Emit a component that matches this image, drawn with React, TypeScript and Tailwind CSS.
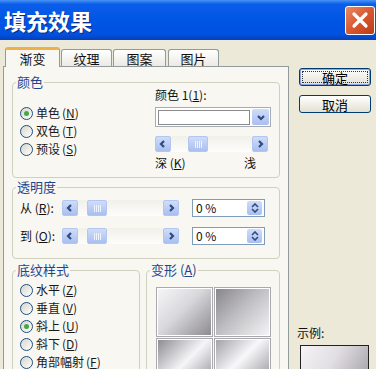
import React from "react";

const F = "font-['Noto_Sans_CJK_SC','Noto_Sans',sans-serif]";

function Chevron({ dir }: { dir: "left" | "right" | "down" | "up" }) {
  const d = {
    left: "M6 2 L3 5 L6 8",
    right: "M4 2 L7 5 L4 8",
    down: "M2 4 L5 7 L8 4",
    up: "M2 6 L5 3 L8 6",
  }[dir];
  return (
    <svg width="10" height="10" viewBox="0 0 10 10">
      <path d={d} fill="none" stroke="#2f4a80" strokeWidth="2.2" />
    </svg>
  );
}

function Radio({ checked }: { checked?: boolean }) {
  return (
    <span className="w-[13px] h-[13px] shrink-0 rounded-full border border-[#1c5180] bg-gradient-to-br from-[#d6d5cc] to-[#ffffff] flex items-center justify-center">
      {checked && <span className="w-[5px] h-[5px] rounded-full bg-[#45a845]" />}
    </span>
  );
}

function RadioRow({ label, k, checked }: { label: string; k: string; checked?: boolean }) {
  return (
    <div className="h-[18px] flex items-center gap-[3px]">
      <Radio checked={checked} />
      <span className="text-[12px] leading-[14px] text-[#1a1a1a] whitespace-nowrap">
        {label}
        <span className="ml-[2px]">
          (<u>{k}</u>)
        </span>
      </span>
    </div>
  );
}

function ArrowBtn({ dir }: { dir: "left" | "right" }) {
  return (
    <div className="w-[16px] h-[16px] shrink-0 rounded-[2px] border border-[#b2c6f0] bg-gradient-to-b from-[#d0ddfa] to-[#a9bfef] flex items-center justify-center">
      <Chevron dir={dir} />
    </div>
  );
}

function Thumb() {
  return (
    <div className="w-[20px] h-[16px] shrink-0 rounded-[2px] border border-[#b2c6f0] bg-gradient-to-b from-[#d0ddfa] to-[#a9bfef] flex items-center justify-center gap-[1px]">
      <span className="w-[1px] h-[7px] bg-[#eef3fd]" />
      <span className="w-[1px] h-[7px] bg-[#eef3fd]" />
      <span className="w-[1px] h-[7px] bg-[#eef3fd]" />
      <span className="w-[1px] h-[7px] bg-[#eef3fd]" />
    </div>
  );
}

function Slider({ w, off }: { w: string; off: string }) {
  return (
    <div className={`${w} h-[16px] flex items-center bg-gradient-to-b from-[#f1f0ea] to-[#fdfdfb]`}>
      <ArrowBtn dir="left" />
      <div className={off}>
        <Thumb />
      </div>
      <div className="flex-1" />
      <ArrowBtn dir="right" />
    </div>
  );
}

function Group({ label, className, children }: { label: React.ReactNode; className: string; children?: React.ReactNode }) {
  return (
    <div className={`border border-[#d0d0bf] rounded-[4px] shrink-0 ${className}`}>
      <div className="-mt-[9px] ml-[3px] px-[1px] w-fit bg-[#f8f7f2] text-[13px] leading-[16px] text-[#1f4590]">
        {label}
      </div>
      {children}
    </div>
  );
}

function SpinBox() {
  return (
    <div className="ml-[13px] w-[73px] h-[18px] border border-[#7f9db9] bg-white flex items-center">
      <span className="pl-[3px] flex-1 text-[12px] leading-none text-[#111]">0 %</span>
      <div className="w-[15px] h-[14px] mr-[2px] rounded-[2px] bg-gradient-to-b from-[#d0ddfa] to-[#a9bfef] flex flex-col items-center justify-center">
        <svg width="8" height="5" viewBox="0 0 8 5">
          <path d="M1 4 L4 1 L7 4" fill="none" stroke="#2f4a80" strokeWidth="1.6" />
        </svg>
        <svg width="8" height="5" viewBox="0 0 8 5">
          <path d="M1 1 L4 4 L7 1" fill="none" stroke="#2f4a80" strokeWidth="1.6" />
        </svg>
      </div>
    </div>
  );
}

function XPButton({ children, def }: { children: React.ReactNode; def?: boolean }) {
  return (
    <div
      className={`w-[72px] h-[18px] rounded-[3px] border border-[#003c74] bg-gradient-to-b from-[#ffffff] to-[#e3e0d2] flex ${
        def ? "p-[2px] shadow-[inset_0_0_0_1px_#8aa6e8]" : ""
      }`}
    >
      <div
        className={`flex-1 flex items-center justify-center text-[13px] leading-none text-black ${
          def ? "border border-dotted border-[#333]" : ""
        }`}
      >
        {children}
      </div>
    </div>
  );
}

export default function App() {
  return (
    <div className={`w-[376px] h-[369px] overflow-hidden bg-[#ece9d8] ${F} flex flex-col`}>
      {/* Title bar */}
      <div className="h-[40px] shrink-0 flex items-center justify-between pl-[4px] pr-[1px] bg-[linear-gradient(to_bottom,#4a94f6_0%,#0b5ee9_10%,#0055e4_50%,#0052e0_85%,#0640b8_100%)]">
        <span className="text-[22px] font-bold leading-none text-white [text-shadow:1px_1px_0_#0a2a8a]">
          填充效果
        </span>
        <div className="w-[30px] h-[29px] rounded-[3px] border border-white bg-gradient-to-br from-[#ea8865] via-[#d8582f] to-[#b93a18] flex items-center justify-center">
          <svg width="18" height="18" viewBox="0 0 18 18">
            <path d="M3 3 L15 15 M15 3 L3 15" stroke="#ffffff" strokeWidth="3.2" strokeLinecap="round" />
          </svg>
        </div>
      </div>

      <div className="flex flex-1 min-h-0">
        {/* Left: tabs + panel */}
        <div className="w-[289px] shrink-0 pl-[3px] pt-[7px] flex flex-col">
          <div className="h-[19px] flex items-end pl-[2px]">
            <div className="relative z-10 w-[55px] h-[20px] -mb-[1px] border border-b-0 border-[#919b9c] border-t-[3px] border-t-[#f0b048] rounded-t-[3px] bg-[#f8f7f2] flex items-center justify-center text-[13px] leading-none text-[#111]">
              渐变
            </div>
            <div className="ml-[1px] w-[51px] h-[17px] border border-b-0 border-[#919b9c] rounded-t-[3px] bg-gradient-to-b from-[#ffffff] to-[#ebeae4] flex items-center justify-center text-[13px] leading-none text-[#111]">
              纹理
            </div>
            <div className="ml-[1px] w-[53px] h-[17px] border border-b-0 border-[#919b9c] rounded-t-[3px] bg-gradient-to-b from-[#ffffff] to-[#ebeae4] flex items-center justify-center text-[13px] leading-none text-[#111]">
              图案
            </div>
            <div className="ml-[2px] w-[51px] h-[17px] border border-b-0 border-[#919b9c] rounded-t-[3px] bg-gradient-to-b from-[#ffffff] to-[#ebeae4] flex items-center justify-center text-[13px] leading-none text-[#111]">
              图片
            </div>
          </div>

          <div className="w-[286px] h-[320px] shrink-0 border border-[#919b9c] bg-[#f8f7f2] pl-[8px] pr-[8px] pt-[15px] flex flex-col">
            {/* 颜色 */}
            <Group label="颜色" className="w-[268px] h-[96px]">
              <div className="flex">
                <div className="w-[142px] pl-[7px] pt-[14px] flex flex-col">
                  <RadioRow label="单色" k="N" checked />
                  <RadioRow label="双色" k="T" />
                  <RadioRow label="预设" k="S" />
                </div>
                <div className="w-[116px] -mt-[2px] flex flex-col">
                  <div className="h-[14px] text-[12px] leading-[14px] text-[#111] whitespace-nowrap">
                    颜色 1(<u>1</u>):
                  </div>
                  <div className="mt-[5px] w-[116px] h-[20px] border border-[#a5acb5] bg-white flex items-center p-[1px] gap-[2px]">
                    <div className="flex-1 h-[15px] ml-[1px] border border-[#8a8a8a] bg-white" />
                    <div className="w-[17px] h-full rounded-[2px] bg-gradient-to-b from-[#d0ddfa] to-[#a9bfef] flex items-center justify-center">
                      <Chevron dir="down" />
                    </div>
                  </div>
                  <div className="mt-[9px]">
                    <Slider w="w-[113px]" off="ml-[17px]" />
                  </div>
                  <div className="mt-[4px] w-[101px] flex justify-between text-[12px] leading-[14px] text-[#111]">
                    <span>
                      深 (<u>K</u>)
                    </span>
                    <span>浅</span>
                  </div>
                </div>
              </div>
            </Group>

            {/* 透明度 */}
            <Group label="透明度" className="mt-[9px] w-[268px] h-[72px]">
              <div className="mt-[4px] h-[18px] pl-[7px] flex items-center">
                <span className="w-[42px] text-[12px] leading-none text-[#111] whitespace-nowrap">
                  从 (<u>R</u>):
                </span>
                <Slider w="w-[117px]" off="ml-[9px]" />
                <SpinBox />
              </div>
              <div className="mt-[10px] h-[18px] pl-[7px] flex items-center">
                <span className="w-[42px] text-[12px] leading-none text-[#111] whitespace-nowrap">
                  到 (<u>O</u>):
                </span>
                <Slider w="w-[117px]" off="ml-[9px]" />
                <SpinBox />
              </div>
            </Group>

            <div className="mt-[11px] flex gap-[6px]">
              <Group label="底纹样式" className="w-[128px] h-[130px]">
                <div className="mt-[3px] pl-[7px] flex flex-col">
                  <RadioRow label="水平" k="Z" />
                  <RadioRow label="垂直" k="V" />
                  <RadioRow label="斜上" k="U" checked />
                  <RadioRow label="斜下" k="D" />
                  <RadioRow label="角部幅射" k="F" />
                </div>
              </Group>
              <Group
                label={
                  <span>
                    变形 (<u>A</u>)
                  </span>
                }
                className="w-[134px] h-[130px]"
              >
                <div className="mt-[9px] ml-[9px] grid grid-cols-[57px_57px] gap-[1px] w-fit">
                  <div className="h-[50px] border border-[#a9a9ae] shadow-[inset_0_0_0_1px_#ffffff] bg-[linear-gradient(135deg,#f6f6f8_0%,#d9d8dc_45%,#8a888e_100%)]" />
                  <div className="h-[50px] border border-[#a9a9ae] shadow-[inset_0_0_0_1px_#ffffff] bg-[linear-gradient(135deg,#86848a_0%,#bdbcc0_45%,#f6f6f8_100%)]" />
                  <div className="h-[50px] border border-[#a9a9ae] shadow-[inset_0_0_0_1px_#ffffff] bg-[linear-gradient(135deg,#8a888e_0%,#f6f6f8_50%,#8a888e_100%)]" />
                  <div className="h-[50px] border border-[#a9a9ae] shadow-[inset_0_0_0_1px_#ffffff] bg-[linear-gradient(135deg,#a09ea4_0%,#f8f8fa_45%,#8a888e_100%)]" />
                </div>
              </Group>
            </div>
          </div>
        </div>

        {/* Right column */}
        <div className="flex-1 pl-[10px] pt-[28px] flex flex-col">
          <XPButton def>确定</XPButton>
          <div className="mt-[9px]">
            <XPButton>取消</XPButton>
          </div>
          <div className="mt-[213px] -ml-[2px] h-[14px] text-[12px] leading-[14px] text-[#111]">示例:</div>
          <div className="mt-[5px] ml-[1px] w-[69px] h-[40px] shrink-0 border border-[#222] bg-[linear-gradient(120deg,#f6f3f6_0%,#e2dfe4_45%,#a29ea6_100%)]" />
        </div>
      </div>
    </div>
  );
}
